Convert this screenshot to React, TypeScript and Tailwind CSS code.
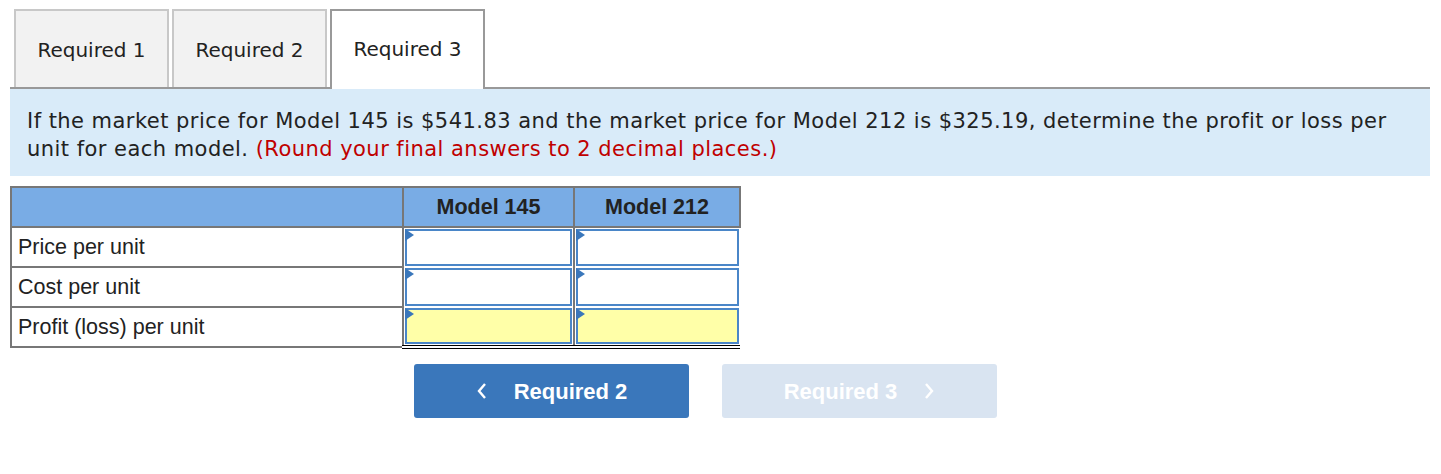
import React from "react";

function Cell({ yellow = false, last = false }: { yellow?: boolean; last?: boolean }) {
  return (
    <td
      className={
        "p-0 h-[40px] border-l-2 border-[#777] " +
        (last ? "border-b-[4px] border-b-black border-double" : "")
      }
    >
      <div className="relative h-full w-full p-[1px]">
        <div
          className={
            "h-full w-full border-2 border-[#4a86c8] " +
            (yellow ? "bg-[#ffffa8]" : "bg-white")
          }
        />
        <div className="absolute left-[1px] top-[1px] w-0 h-0 border-t-[6px] border-b-[6px] border-l-[9px] border-t-transparent border-b-transparent border-l-[#3a77bb]" />
      </div>
    </td>
  );
}

export default function App() {
  const tabs = ["Required 1", "Required 2", "Required 3"];
  return (
    <div className="w-[1441px] h-[474px] bg-white" style={{ fontFamily: "'DejaVu Sans', Verdana, sans-serif" }}>
      <div className="pt-[9px] pl-[10px] pr-[11px]">
        <div className="flex items-end gap-[3px] pl-[4px] border-b-2 border-[#999]">
          {tabs.map((t, i) =>
            i === 2 ? (
              <div
                key={t}
                className="w-[155px] h-[80px] -mb-[2px] flex items-center justify-center bg-white border-2 border-b-0 border-[#999] text-[20px] text-[#222]"
              >
                <span className="-mt-[2px]">{t}</span>
              </div>
            ) : (
              <div
                key={t}
                className="w-[155px] h-[78px] flex items-center justify-center bg-[#f2f2f2] border-2 border-b-0 border-[#c8c8c8] text-[20px] text-[#222]"
              >
                <span className="mt-[2px]">{t}</span>
              </div>
            )
          )}
        </div>
        <div className="bg-[#d9ebf9] px-[17px] pt-[18px] pb-[13px] text-[21px] tracking-[0.46px] leading-[28px] text-[#222]">
          If the market price for Model 145 is $541.83 and the market price for Model 212 is $325.19, determine the profit or loss per unit for each model.{" "}
          <span className="text-[#c00000]">(Round your final answers to 2 decimal places.)</span>
        </div>
        <div className="mt-[10px]" style={{ fontFamily: "'Liberation Sans', Arial, sans-serif" }}>
          <table className="border-collapse text-[21.5px] text-[#222]">
            <thead>
              <tr className="h-[40px] bg-[#79ace5]">
                <th className="w-[392px] border-2 border-[#777]"></th>
                <th className="w-[171px] border-2 border-[#777] font-bold">Model 145</th>
                <th className="w-[166px] border-2 border-[#777] font-bold">Model 212</th>
              </tr>
            </thead>
            <tbody>
              {["Price per unit", "Cost per unit", "Profit (loss) per unit"].map((l, i) => (
                <tr key={l} className="h-[40px]">
                  <td className="border-2 border-[#777] px-[6px] text-left">{l}</td>
                  <Cell yellow={i === 2} last={i === 2} />
                  <Cell yellow={i === 2} last={i === 2} />
                </tr>
              ))}
            </tbody>
          </table>
        </div>
        <div className="flex gap-[33px] ml-[404px] mt-[15px]" style={{ fontFamily: "'Liberation Sans', Arial, sans-serif" }}>
          <button className="w-[275px] h-[54px] rounded-[3px] bg-[#3a77bb] text-white text-[22px] font-bold flex items-center justify-center gap-[26px]">
            <svg width="12" height="20" viewBox="0 0 12 20" fill="none">
              <path d="M9 3 L3 10 L9 17" stroke="white" strokeWidth="2.4" />
            </svg>
            <span>Required 2</span>
          </button>
          <button className="w-[275px] h-[54px] rounded-[3px] bg-[#d9e4f1] text-white text-[22px] font-bold flex items-center justify-center gap-[26px]">
            <span>Required 3</span>
            <svg width="12" height="20" viewBox="0 0 12 20" fill="none">
              <path d="M3 3 L9 10 L3 17" stroke="white" strokeWidth="2.4" />
            </svg>
          </button>
        </div>
      </div>
    </div>
  );
}
